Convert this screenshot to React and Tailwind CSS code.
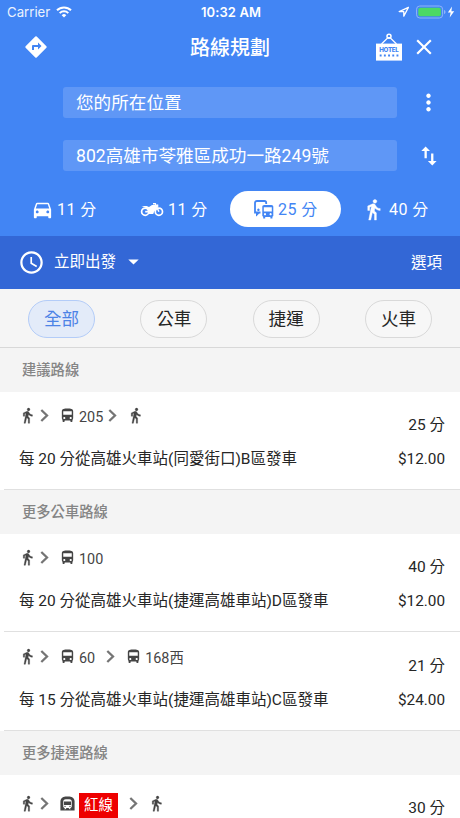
import {
  MdAccessTime,
  MdArrowDropDown,
  MdClose,
  MdDirectionsBus,
  MdDirectionsCar,
  MdMoreVert,
  MdSubway,
} from 'react-icons/md';

const filters = ['全部', '公車', '捷運', '火車'];

function StatusBar() {
  return (
    <div className="flex h-6 items-center pl-[7px] pr-[5px] font-['Inter'] text-[13px] leading-6">
      <div className="flex flex-1 items-center gap-[6px]">
        <span className="text-[13.2px] opacity-90">Carrier</span>
        <svg width="16" height="12" viewBox="0 0 16 12" fill="none" stroke="currentColor" strokeWidth="2">
          <path d="M1 4.3a10 10 0 0 1 14 0M3.7 7.1a6.1 6.1 0 0 1 8.6 0" />
          <path d="M8 11.6 5.7 9.2a3.3 3.3 0 0 1 4.6 0z" fill="currentColor" stroke="none" />
        </svg>
      </div>
      <span className="text-[13px] font-semibold tracking-[0.1px]">10:32 AM</span>
      <div className="flex flex-1 items-center justify-end">
        <svg className="mr-[6px]" width="12" height="12" viewBox="0 0 12 12" fill="none" stroke="currentColor" strokeWidth="1.3" strokeLinejoin="round">
          <path d="M10.4 1.4 1.2 5.6h4.6v4.6z" />
        </svg>
        <svg width="30" height="14" viewBox="0 0 30 14">
          <rect x="0.6" y="1" width="26" height="12" rx="3.2" fill="none" stroke="#8fb5f9" strokeWidth="1" />
          <rect x="2.3" y="2.7" width="22.6" height="8.6" rx="1.8" fill="#4cd964" />
          <path d="M28 5v4c1-.3 1.5-1 1.5-2S29 5.3 28 5z" fill="#8fb5f9" />
        </svg>
        <svg className="ml-[1px]" width="8" height="12" viewBox="0 0 8 12" fill="currentColor">
          <path d="M5 .6.9 6.6h2.7L2.7 11.4 7.2 5.2H4.4z" />
        </svg>
      </div>
    </div>
  );
}

function DirectionsIcon() {
  return (
    <svg width="24" height="24" viewBox="0 0 24 24" fill="#fff">
      <path d="M22.4 11.3 12.7 1.6a1 1 0 0 0-1.4 0L1.6 11.3a1 1 0 0 0 0 1.4l9.7 9.7a1 1 0 0 0 1.4 0l9.7-9.7a1 1 0 0 0 0-1.4zM14 14.5V12h-4v3H8v-4a1 1 0 0 1 1-1h5V7.5l3.5 3.5z" />
    </svg>
  );
}

function HotelSign() {
  return (
    <svg width="26" height="28" viewBox="0 0 26 28">
      <path d="M5.5 11 12 4.6h2L20.5 11" fill="none" stroke="#fff" strokeWidth="1.3" />
      <circle cx="13" cy="3.2" r="2" fill="none" stroke="#fff" strokeWidth="1.5" />
      <rect y="10.6" width="26" height="17" fill="#fff" />
      <text x="13" y="18.9" textAnchor="middle" fontFamily="Inter" fontSize="6.2" fontWeight="800" textLength="19.5" fill="#4285f4">
        HOTEL
      </text>
      <path d="M3.7 22.5h19" stroke="#4285f4" strokeWidth="1.9" strokeDasharray="1.9 2.3" />
    </svg>
  );
}

function MotorcycleIcon() {
  return (
    <svg width="24" height="15" viewBox="0 0 24 15" fill="none" stroke="#fff">
      <circle cx="5.2" cy="9.7" r="3.6" strokeWidth="1.7" />
      <circle cx="18.9" cy="9.7" r="3.6" strokeWidth="1.7" />
      <path d="M13 1.8h2.3l3.6 7.9" strokeWidth="1.5" />
      <path d="M5.2 9.7h4" strokeWidth="1.7" />
      <path fill="#fff" stroke="none" d="M1.5 3.9h5.2l2.3 1 3-2h3.6l1.6 3.2-3 3.500-1 2.500H9L7.200 7.500 5.300 5.600z" />
      <path d="M15.8 3.7 18 2.6v2.6z" fill="#fff" stroke="#fff" strokeWidth="0.6" />
    </svg>
  );
}

function TransitIcon() {
  return (
    <svg width="20" height="19" viewBox="0 0 20 19" fill="none" stroke="#4285f4">
      <path d="M12.2 4V2.8c0-1.2-.7-1.8-1.8-1.8H3C1.8 1 1 1.7 1 2.8V12.5h5.5" strokeWidth="1.8" />
      <path d="M2 13h3.5L2.6 16.3H2z" fill="#4285f4" stroke="none" />
      <path d="M4.4 8.6a1.2 1.2 0 1 0 .01 0z" fill="#4285f4" stroke="none" />
      <path
        fill="#4285f4"
        stroke="none"
        fillRule="evenodd"
        d="M10.3 5h7c1.3 0 2 .7 2 1.9V16l-.9.7V18.5h-2V17h-5.2v1.5h-2v-1.8l-.9-.7V6.9C8.3 5.7 9 5 10.3 5zM9.8 7.3v4.2h8V7.3zM11 13.1a1.1 1.1 0 1 0 .01 0zM16.6 13.1a1.1 1.1 0 1 0 .01 0z"
      />
    </svg>
  );
}

function SwapIcon() {
  return (
    <svg width="16" height="20" viewBox="0 0 16 20" fill="#fff">
      <path d="M4.6.5 9 5H5.8v7.3H3.5V5H.3z" />
      <path d="M10.1 7.5h2.3V15h3.2l-4.3 4.5L6.9 15h3.2z" />
    </svg>
  );
}

function Chevron({ className }) {
  return (
    <svg className={className} width="9" height="13" viewBox="0 0 9 13" fill="none" stroke="#757575" strokeWidth="2.3">
      <path d="M1.3 1 7 6.5 1.3 12" />
    </svg>
  );
}

function Walk({ className, size = 17 }) {
  return (
    <svg className={className} width={size} height={size} viewBox="0 0 24 24" fill="currentColor" stroke="currentColor" strokeWidth="0.4">
      <path d="M13.500 5.500c1.100 0 2-.9 2-2s-.9-2-2-2-2 .9-2 2 .9 2 2 2zM9.800 8.900 7 23h2.100l1.800-8 2.100 2v6h2v-7.500l-2.100-2 .6-3C14.800 12 16.800 13 19 13v-2c-1.900 0-3.500-1-4.300-2.400l-1-1.600c-.4-.6-1-1-1.700-1-.3 0-.5.1-.8.1L6 8.300V13h2V9.600z" />
    </svg>
  );
}

function Bus({ className }) {
  return <MdDirectionsBus className={className} size={17} />;
}

function Line({ children, className = 'ml-[3px] pt-[5px]' }) {
  return <span className={`${className} text-[14.4px]`}>{children}</span>;
}

function Section({ title }) {
  return (
    <h2 className="h-[44px] bg-[#f4f4f4] pl-[22px] text-[14.3px] font-medium leading-[45px] text-[#858585]">
      {title}
    </h2>
  );
}

function Route({ minutes, desc, price, className = 'h-[98px] pt-[8px]', iconsClassName = '', children }) {
  return (
    <div className={`${className} ml-[4px] border-b border-[#e0e0e0] pl-[15px] pr-[15px]`}>
      <div className="flex justify-between leading-[30px]">
        <div className={`${iconsClassName} flex h-[30px] items-center text-[#454545]`}>
          <Walk />
          {children}
        </div>
        <span className="pt-[10px] text-[15.5px]">{minutes} 分</span>
      </div>
      {desc && (
        <div className="flex justify-between pt-[4px] text-[15.5px] leading-[30px]">
          <span>{desc}</span>
          <span className="text-[15.3px]">{price}</span>
        </div>
      )}
    </div>
  );
}

export default function App() {
  return (
    <div className="h-[818px] w-[460px] overflow-hidden bg-white font-['Roboto','Noto_Sans_CJK_TC',sans-serif] text-[#262626]">
      <header className="h-[236px] bg-[#4285f4] text-white">
        <StatusBar />
        <div className="flex h-[46px] items-center pl-[24px] pr-[24px]">
          <div className="flex flex-1">
            <DirectionsIcon />
          </div>
          <h1 className="pt-[1px] text-[20px] font-medium leading-[46px]">路線規劃</h1>
          <div className="flex flex-1 items-center justify-end gap-[9px]">
            <HotelSign />
            <MdClose className="-mr-[1px]" size={26} />
          </div>
        </div>

        <div className="flex items-center pl-[63px] pt-[17px]">
          <div className="h-[31px] w-[334px] rounded-[3px] bg-[#5f97f6] pl-[13px] text-[17.6px] leading-[33px]">您的所在位置</div>
          <MdMoreVert className="ml-[18px]" size={27} />
        </div>
        <div className="flex items-center pl-[63px] pt-[22px]">
          <div className="h-[31px] w-[334px] rounded-[3px] bg-[#5f97f6] pl-[13px] text-[17.6px] leading-[33px]">
            802高雄市苓雅區成功一路249號
          </div>
          <div className="ml-[24px]">
            <SwapIcon />
          </div>
        </div>

        <div className="mt-[20px] flex h-[36px] items-center text-[16px] tracking-[0.4px]">
          <div className="flex w-[140px] items-center pl-[31px]">
            <MdDirectionsCar size={23} />
            <span className="ml-[3px] pt-[2px]">11 分</span>
          </div>
          <div className="flex w-[90px] items-center">
            <MotorcycleIcon />
            <span className="ml-[4px] pt-[2px]">11 分</span>
          </div>
          <div className="flex h-[36px] w-[111px] items-center rounded-full bg-white pl-[24px] text-[#4285f4]">
            <TransitIcon />
            <span className="ml-[4px] pt-[2px]">25 分</span>
          </div>
          <div className="flex items-center pl-[21px]">
            <Walk size={23} />
            <span className="ml-[4px] pt-[2px]">40 分</span>
          </div>
        </div>
      </header>

      <div className="flex h-[53px] items-center bg-[#3367d6] pl-[18px] pr-[18px] text-[15.5px] text-white">
        <MdAccessTime size={27} />
        <span className="ml-[9px]">立即出發</span>
        <MdArrowDropDown className="-mt-[3px] ml-[5px]" size={25} />
        <span className="ml-auto pt-[2px]">選項</span>
      </div>

      <div className="flex h-[59px] justify-between border-b border-[#d8d8d8] bg-[#f5f5f5] px-[28px] pt-[11px]">
        {filters.map((name, i) => (
          <button
            key={name}
            className={
              i === 0
                ? 'h-[38px] w-[67px] rounded-full border border-[#b3ccf8] bg-[#e3ebf9] text-[17.6px] leading-[34px] text-[#4d83e6]'
                : 'h-[38px] w-[67px] rounded-full border border-[#d9d9d9] bg-[#f7f7f7] text-[17.6px] leading-[34px]'
            }
          >
            {name}
          </button>
        ))}
      </div>

      <Section title="建議路線" />
      <Route minutes={25} desc="每 20 分從高雄火車站(同愛街口)B區發車" price="$12.00">
        <Chevron className="ml-[4px]" />
        <Bus className="ml-[10px]" />
        <Line>205</Line>
        <Chevron className="ml-[5px]" />
        <Walk className="ml-[10px]" />
      </Route>

      <Section title="更多公車路線" />
      <Route minutes={40} desc="每 20 分從高雄火車站(捷運高雄車站)D區發車" price="$12.00">
        <Chevron className="ml-[4px]" />
        <Bus className="ml-[10px]" />
        <Line>100</Line>
      </Route>
      <Route
        className="h-[99px] pt-[9px]"
        minutes={21}
        desc="每 15 分從高雄火車站(捷運高雄車站)C區發車"
        price="$24.00"
      >
        <Chevron className="ml-[4px]" />
        <Bus className="ml-[10px]" />
        <Line>60</Line>
        <Chevron className="ml-[11px]" />
        <Bus className="ml-[10px]" />
        <Line>168西</Line>
      </Route>

      <Section title="更多捷運路線" />
      <Route className="h-[98px] pt-[8px]" iconsClassName="mt-[5px]" minutes={30}>
        <Chevron className="ml-[4px]" />
        <MdSubway className="ml-[10px]" size={17} />
        <Line className="ml-[3px] mt-[5px] h-[26px] bg-[#ee0000] px-[5px] leading-[26px] text-white">紅線</Line>
        <Chevron className="ml-[11px]" />
        <Walk className="ml-[10px]" />
      </Route>
    </div>
  );
}
